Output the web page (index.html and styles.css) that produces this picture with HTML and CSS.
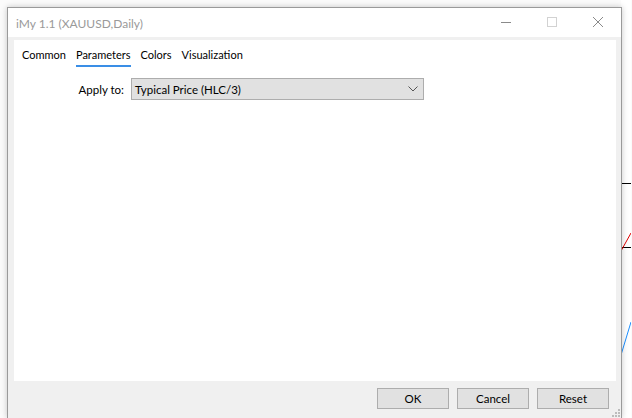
FILE: index.html
```html
<!DOCTYPE html>
<html>
<head>
<meta charset="utf-8">
<link rel="stylesheet" href="styles.css">
</head>
<body>
<div class="desk">
  <div class="window">
    <div class="titlebar">
      <span class="title">iMy 1.1 (XAUUSD,Daily)</span>
      <div class="controls">
        <svg class="ctl" width="46" height="28" viewBox="0 0 46 28"><line x1="18" y1="14.5" x2="28" y2="14.5" stroke="#8a8a8a" stroke-width="1"/></svg>
        <svg class="ctl" width="46" height="28" viewBox="0 0 46 28"><rect x="18.5" y="9.5" width="9" height="9" fill="none" stroke="#d2d2d2" stroke-width="1"/></svg>
        <svg class="ctl" width="46" height="28" viewBox="0 0 46 28"><path d="M18 9 L28 19 M28 9 L18 19" stroke="#8a8a8a" stroke-width="1" fill="none"/></svg>
      </div>
    </div>
    <div class="body">
      <div class="panel">
        <div class="tabs">
          <span class="tab">Common</span>
          <span class="tab active">Parameters</span>
          <span class="tab">Colors</span>
          <span class="tab">Visualization</span>
        </div>
        <div class="row">
          <span class="label">Apply to:</span>
          <div class="select">
            <span>Typical Price (HLC/3)</span>
            <svg width="10" height="6" viewBox="0 0 10 6"><path d="M0.5 0.5 L5 5 L9.5 0.5" stroke="#555" stroke-width="1" fill="none"/></svg>
          </div>
        </div>
      </div>
      <div class="footer">
        <button class="btn">OK</button>
        <button class="btn">Cancel</button>
        <button class="btn">Reset</button>
      </div>
      <svg class="grip" width="8" height="8" viewBox="0 0 8 8">
        <rect x="6" y="0" width="2" height="2" fill="#bcbcbc"/>
        <rect x="3" y="3" width="2" height="2" fill="#bcbcbc"/>
        <rect x="6" y="3" width="2" height="2" fill="#bcbcbc"/>
        <rect x="0" y="6" width="2" height="2" fill="#bcbcbc"/>
        <rect x="3" y="6" width="2" height="2" fill="#bcbcbc"/>
        <rect x="6" y="6" width="2" height="2" fill="#bcbcbc"/>
      </svg>
    </div>
  </div>
  <svg class="chart" width="10" height="418" viewBox="0 0 10 418">
    <path d="M0.5 175 L0.5 183.5 L10 183.5" stroke="#000" stroke-width="1" fill="none"/>
    <path d="M0 247.5 L10 247.5" stroke="#000" stroke-width="1" fill="none"/>
    <path d="M0 251 L10 233" stroke="#e00000" stroke-width="1" fill="none"/>
    <path d="M0 355 L10 322" stroke="#1e90ff" stroke-width="1" fill="none"/>
  </svg>
</div>
</body>
</html>
```

FILE: styles.css
```css
html, body {
  margin: 0;
  padding: 0;
}
body {
  width: 632px;
  height: 418px;
  overflow: hidden;
  background: #fbfbfb;
  font-family: Lato, "Noto Sans", sans-serif;
  font-size: 11.5px;
  color: #000;
}
.desk {
  display: flex;
  align-items: flex-start;
  padding: 7px 0 0 7px;
  height: 418px;
  box-sizing: border-box;
}
.window {
  width: 615px;
  height: 411px;
  box-sizing: border-box;
  border: 1px solid #9a9a9a;
  border-bottom: none;
  background: #f0f0f0;
  box-shadow: 0 0 6px rgba(0,0,0,0.22);
  display: flex;
  flex-direction: column;
  position: relative;
  z-index: 1;
}
.titlebar {
  height: 29px;
  background: #fff;
  display: flex;
  align-items: center;
  justify-content: space-between;
}
.title {
  padding-left: 8px;
  color: #9a9a9a;
  font-size: 12px;
  margin-top: 2px;
}
.controls {
  display: flex;
  align-self: flex-start;
}
.ctl {
  display: block;
}
.body {
  flex: 1;
  padding: 3px 5px 0 6px;
  display: flex;
  flex-direction: column;
  position: relative;
}
.panel {
  height: 341px;
  background: #fff;
}
.tabs {
  display: flex;
  gap: 10px;
  padding: 7px 0 0 8px;
  font-size: 11px;
}
.tab {
  line-height: 15px;
  padding-bottom: 3px;
  border-bottom: 2px solid transparent;
}
.tab.active {
  border-bottom-color: #3a8ee6;
}
.row {
  display: flex;
  align-items: center;
  margin-top: 11px;
}
.label {
  width: 110px;
  white-space: nowrap;
  text-align: right;
  margin-right: 7px;
}
.select {
  width: 293px;
  height: 22px;
  box-sizing: border-box;
  border: 1px solid #adadad;
  background: #e1e1e1;
  display: flex;
  align-items: center;
  justify-content: space-between;
  padding: 0 5px 0 3px;
}
.select svg {
  display: block;
}
.footer {
  display: flex;
  justify-content: flex-end;
  gap: 8px;
  padding: 7px 7px 0 0;
}
.btn {
  width: 72px;
  height: 21px;
  box-sizing: border-box;
  border: 1px solid #adadad;
  background: #e1e1e1;
  font-family: Lato, "Noto Sans", sans-serif;
  font-size: 11.5px;
  color: #000;
  padding: 0;
  line-height: 18px;
}
.grip {
  position: absolute;
  right: 1px;
  bottom: 1px;
}
.chart {
  display: block;
  margin-top: -7px;
  margin-left: -1px;
  background: #fff;
}
```
